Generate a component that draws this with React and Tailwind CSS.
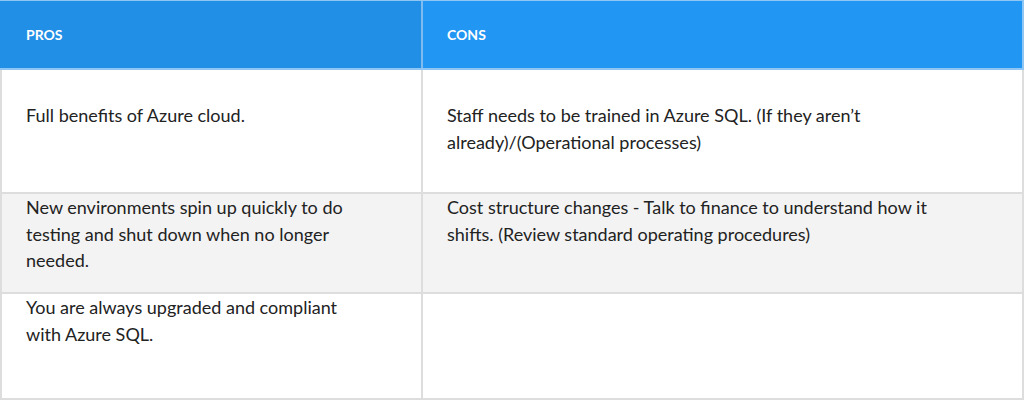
const rows = [
  {
    pros: "Full benefits of Azure cloud.",
    cons: "Staff needs to be trained in Azure SQL. (If they aren’t already)/(Operational processes)",
    height: "h-[124px]",
    pad: "pt-[32px]",
    bg: "bg-white",
  },
  {
    pros: "New environments spin up quickly to do testing and shut down when no longer needed.",
    cons: "Cost structure changes - Talk to finance to understand how it shifts. (Review standard operating procedures)",
    height: "h-[100px]",
    pad: "pt-0",
    bg: "bg-[#f3f3f3]",
  },
  {
    pros: "You are always upgraded and compliant with Azure SQL.",
    cons: "",
    height: "h-[106px]",
    pad: "pt-0",
    bg: "bg-white",
  },
];

export default function App() {
  return (
    <div className="w-[1024px] h-[400px] bg-white font-['Lato','Noto_Sans',sans-serif] text-[#222222]">
      {/* header */}
      <div className="flex h-[70px] border-t border-b-2 border-[#8fc6f4]">
        <div className="w-[423px] bg-[#228fe6] border-r-2 border-[#7dbbf0] pl-[26px] flex items-center text-white text-[14px] font-bold">
          PROS
        </div>
        <div className="flex-1 bg-[#2196f3] border-r-2 border-[#8fc6f4] pl-[24px] flex items-center text-white text-[14px] font-bold">
          CONS
        </div>
      </div>
      {rows.map((row, i) => (
        <div key={i} className={`flex border-b-2 border-[#dddddd] ${row.height} ${row.bg}`}>
          <div className={`w-[423px] border-l-2 border-r-2 border-[#dddddd] pl-[24px] pr-[60px] text-[18px] leading-[26.5px] ${row.pad}`}>
            {row.pros}
          </div>
          <div className={`flex-1 border-r-2 border-[#dddddd] pl-[24px] text-[18px] leading-[26.5px] ${row.pad}`}>
            <p className="max-w-[500px]">{row.cons}</p>
          </div>
        </div>
      ))}
    </div>
  );
}
